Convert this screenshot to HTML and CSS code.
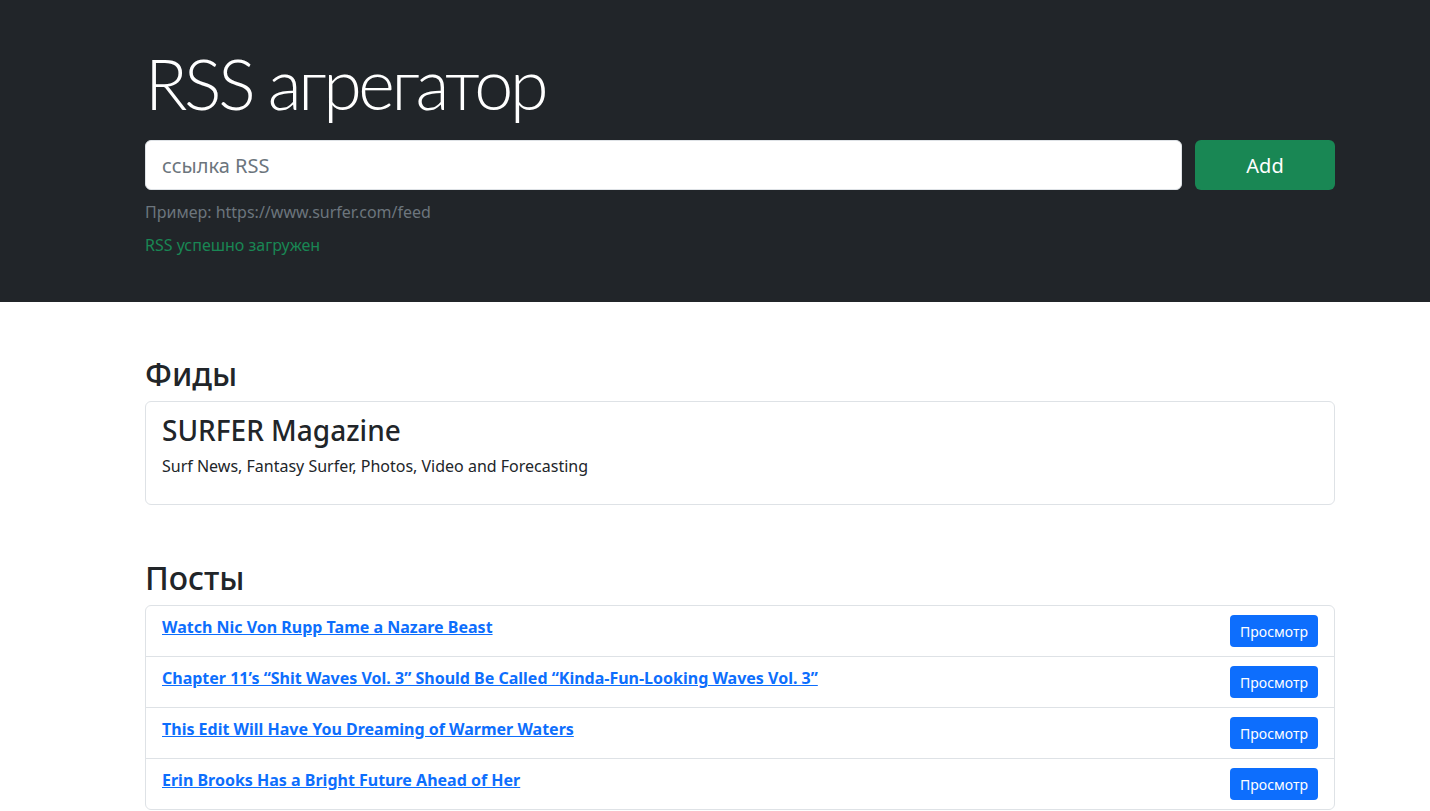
FILE: index.html
```html
<!DOCTYPE html>
<html lang="ru">
<head>
<meta charset="utf-8">
<title>RSS агрегатор</title>
<link rel="stylesheet" href="styles.css">
</head>
<body>
<section class="hero">
  <div class="wrap">
    <h1 class="title">RSS агрегатор</h1>
    <form class="rss-form">
      <input class="rss-input" type="text" placeholder="ссылка RSS">
      <button class="add-btn" type="button">Add</button>
    </form>
    <p class="hint">Пример: https://www.surfer.com/feed</p>
    <p class="feedback">RSS успешно загружен</p>
  </div>
</section>
<main class="wrap content">
  <h2 class="section-title">Фиды</h2>
  <div class="card feed">
    <h3 class="feed-title">SURFER Magazine</h3>
    <p class="feed-desc">Surf News, Fantasy Surfer, Photos, Video and Forecasting</p>
  </div>
  <h2 class="section-title posts-title">Посты</h2>
  <ul class="card posts">
    <li class="post"><a href="#" class="post-link">Watch Nic Von Rupp Tame a Nazare Beast</a><button class="view-btn" type="button">Просмотр</button></li>
    <li class="post"><a href="#" class="post-link">Chapter 11’s “Shit Waves Vol. 3” Should Be Called “Kinda-Fun-Looking Waves Vol. 3”</a><button class="view-btn" type="button">Просмотр</button></li>
    <li class="post"><a href="#" class="post-link">This Edit Will Have You Dreaming of Warmer Waters</a><button class="view-btn" type="button">Просмотр</button></li>
    <li class="post"><a href="#" class="post-link">Erin Brooks Has a Bright Future Ahead of Her</a><button class="view-btn" type="button">Просмотр</button></li>
  </ul>
</main>
</body>
</html>
```
FILE: styles.css
```css
* { box-sizing: border-box; }
html, body { margin: 0; padding: 0; }
body {
  font-family: "Noto Sans", "Open Sans", sans-serif;
  font-size: 16px;
  line-height: 1.5;
  color: #212529;
  background: #fff;
}
.wrap {
  margin-left: 145px;
  width: 1190px;
}
.hero {
  background: #212529;
  padding: 41px 0 45px;
  height: 302px;
}
.title {
  margin: 0 0 15px;
  font-family: Lato, "Noto Sans", sans-serif;
  font-size: 70px;
  font-weight: 300;
  letter-spacing: -3.4px;
  line-height: 1.2;
  color: #fff;
}
.rss-form {
  display: flex;
  gap: 13px;
  margin: 0;
}
.rss-input {
  flex: 1;
  height: 50px;
  padding: 0 16px;
  font-family: inherit;
  font-size: 20px;
  color: #212529;
  background: #fff;
  border: 1px solid #dee2e6;
  border-radius: 6px;
  outline: none;
}
.rss-input::placeholder { color: #6c757d; }
.add-btn {
  width: 140px;
  height: 50px;
  border: none;
  border-radius: 6px;
  background: #198754;
  color: #fff;
  font-family: inherit;
  font-size: 20px;
}
.hint {
  margin: 10px 0 0;
  color: #6c757d;
}
.feedback {
  margin: 9px 0 0;
  color: #198754;
}
.content { padding-top: 53px; }
.section-title {
  margin: 0 0 8px;
  font-size: 32px;
  font-weight: 500;
  line-height: 1.2;
}
.card {
  border: 1px solid #dee2e6;
  border-radius: 6px;
  background: #fff;
}
.feed {
  padding: 12px 16px 16px;
}
.feed-title {
  margin: 0 0 6px;
  font-size: 28px;
  font-weight: 500;
  line-height: 1.2;
}
.feed-desc { margin: 0 0 10px; }
.posts-title { margin-top: 54px; }
.posts {
  list-style: none;
  margin: 0;
  padding: 0;
}
.post {
  display: flex;
  justify-content: space-between;
  align-items: flex-start;
  padding: 9px 16px;
  border-bottom: 1px solid #dee2e6;
}
.post:last-child { border-bottom: none; }
.post-link {
  color: #0d6efd;
  font-weight: 700;
  text-decoration: underline;
}
.view-btn {
  height: 32px;
  padding: 0 10px;
  border: none;
  border-radius: 4px;
  background: #0d6efd;
  color: #fff;
  font-family: inherit;
  font-size: 14px;
}
```
